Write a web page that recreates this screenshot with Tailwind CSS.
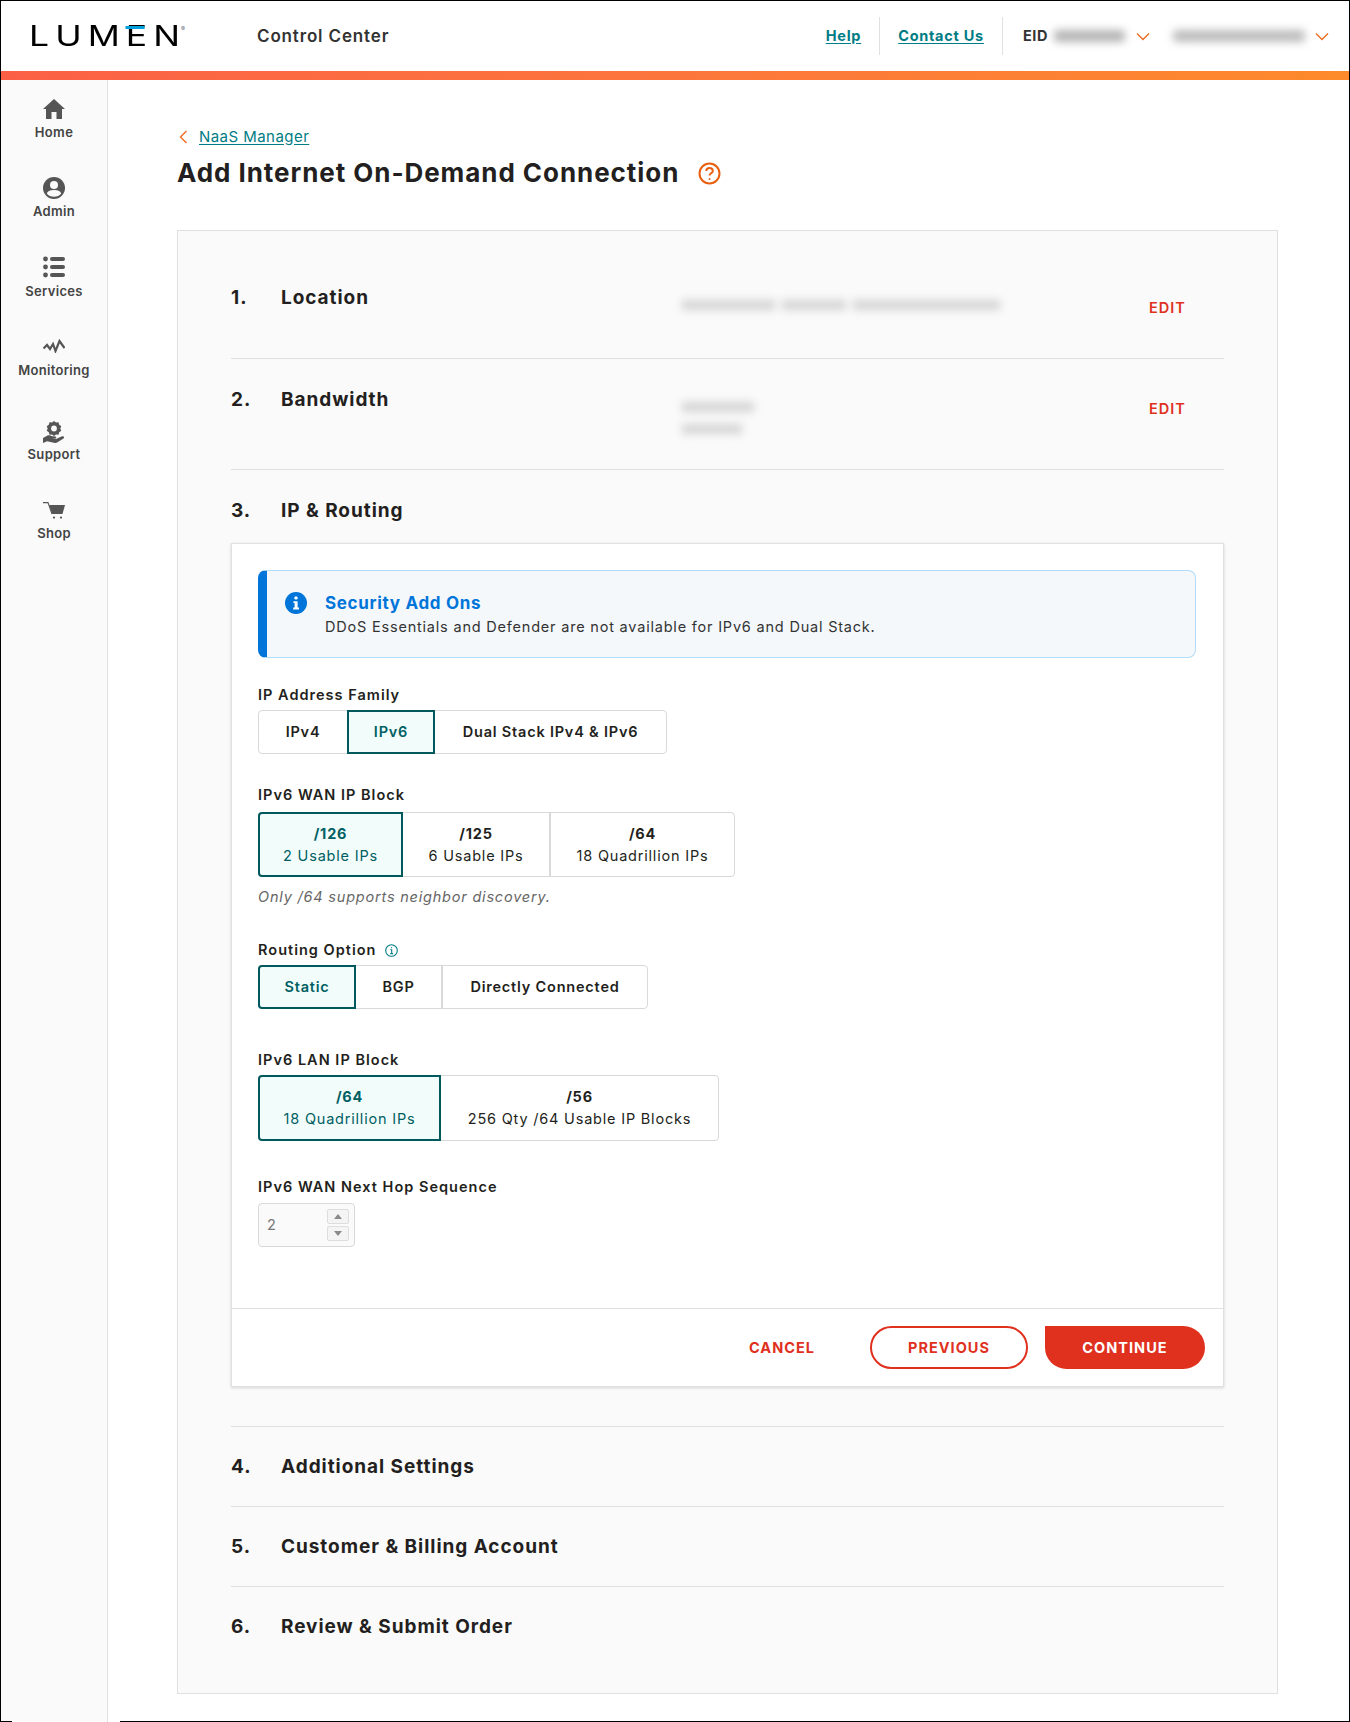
<!DOCTYPE html>
<html lang="en">
  <head>
    <meta charset="UTF-8" />
    <meta name="viewport" content="width=device-width, initial-scale=1.0" />
    <script src="https://cdn.jsdelivr.net/npm/@tailwindcss/browser@4"></script>
    <title>Add Internet On-Demand Connection</title>
  </head>
  <body class="bg-white">
    <div class="relative w-[1350px] h-[1722px] overflow-hidden border-t border-l border-r border-black [font-family:Inter,sans-serif] text-[#231f20]">

      <!-- top header -->
      <header class="h-[70px] flex items-center bg-white">
        <div class="w-[256px] pl-[28px] pb-[1px] flex items-start">
          <span class="relative w-[112px] origin-left scale-x-[1.27] whitespace-nowrap text-[28px] leading-[28px] font-normal tracking-[0.17em] text-black">LUME<span class="tracking-normal">N</span>
            <span class="absolute left-[76px] top-[4px] w-[15px] h-[3px] bg-[#00a0dd]"></span>
          </span>
          <span class="text-[6px] leading-[8px] text-gray-500 ml-[40px] mt-[3px]">®</span>
        </div>
        <span class="mt-[2px] text-[17px] font-semibold text-[#333] tracking-[0.05em]">Control Center</span>
        <div class="ml-auto flex items-center h-[38px] text-[14.5px] font-bold">
          <a class="underline text-[#007c85] tracking-[0.05em] underline-offset-2">Help</a>
          <span class="w-px h-[38px] bg-[#e0e0e0] ml-[18px] mr-[18px]"></span>
          <a class="underline text-[#007c85] tracking-[0.05em] underline-offset-2">Contact Us</a>
          <span class="w-px h-[38px] bg-[#e0e0e0] ml-[18px] mr-[20px]"></span>
          <span class="text-[#333] tracking-[0.04em]">EID</span>
          <span class="ml-[6px] w-[71px] h-[12px] rounded bg-[#b4b4b4] blur-[4px]"></span>
          <svg class="ml-[11px] w-[14px] h-[9px]" viewBox="0 0 14 9" fill="none" stroke="#ee6c1f" stroke-width="1.4"><path d="M1 1.5 L7 7.5 L13 1.5" /></svg>
          <span class="ml-[23px] w-[132px] h-[12px] rounded bg-[#bcbcbc] blur-[4px]"></span>
          <svg class="ml-[10px] mr-[20px] w-[14px] h-[9px]" viewBox="0 0 14 9" fill="none" stroke="#ee6c1f" stroke-width="1.4"><path d="M1 1.5 L7 7.5 L13 1.5" /></svg>
        </div>
      </header>
      <div class="h-[9px] bg-gradient-to-r from-[#fb6046] to-[#fd8a2b]"></div>

      <div class="flex h-[1642px]">
        <!-- sidebar -->
        <nav class="w-[107px] shrink-0 bg-[#fafafa] border-r border-[#e0e0e0] flex flex-col items-center text-[13px] leading-[16px] font-semibold text-[#444] tracking-[0.025em]">
          <div class="flex flex-col items-center pt-[19px] h-[77px]">
            <svg class="w-[22px] h-[20px] mb-[5px]" viewBox="0 0 22 20" fill="#555"><path d="M11 0 L22 10 H19 V20 H13.5 V13 H8.5 V20 H3 V10 H0 Z" /></svg>
            <span>Home</span>
          </div>
          <div class="flex flex-col items-center h-[79px] pt-[20px]">
            <svg class="w-[22px] h-[22px] mb-[4px]" viewBox="0 0 22 22"><circle cx="11" cy="11" r="11" fill="#555" /><circle cx="11" cy="8" r="4" fill="#fafafa" /><path d="M3.8 16.5 C5 13.5 8 13 11 13 C14 13 17 13.5 18.2 16.5 C16.5 18.6 14 19.8 11 19.8 C8 19.8 5.5 18.6 3.8 16.5 Z" fill="#fafafa" /></svg>
            <span>Admin</span>
          </div>
          <div class="flex flex-col items-center h-[79px] pt-[20px]">
            <svg class="w-[22px] h-[22px] mb-[5px]" viewBox="0 0 22 22" fill="#555"><circle cx="2.5" cy="3" r="2.4" /><rect x="7" y="1" width="15" height="4" rx="2" /><circle cx="2.5" cy="11" r="2.4" /><rect x="7" y="9" width="15" height="4" rx="2" /><circle cx="2.5" cy="19" r="2.4" /><rect x="7" y="17" width="15" height="4" rx="2" /></svg>
            <span>Services</span>
          </div>
          <div class="flex flex-col items-center h-[84px] pt-[24px]">
            <svg class="w-[22px] h-[14px] mb-[9px]" viewBox="0 0 22 14" fill="none" stroke="#555" stroke-width="2.2"><path d="M0.5 9.5 L4 6 L7 10 L10 5 L12.5 12 L16.5 2 L21.5 9" /></svg>
            <span>Monitoring</span>
          </div>
          <div class="flex flex-col items-center h-[79px] pt-[22px]">
            <svg class="w-[22px] h-[22px] mb-[3px]" viewBox="0 0 22 22" fill="#555"><path d="M11 0 L13 1.6 L15.5 1.3 L16.2 3.8 L18.3 5.2 L17.3 7.5 L18.3 9.8 L16.2 11.2 L15.5 13.7 L13 13.4 L11 15 L9 13.4 L6.5 13.7 L5.8 11.2 L3.7 9.8 L4.7 7.5 L3.7 5.2 L5.8 3.8 L6.5 1.3 L9 1.6 Z M11 4.6 A2.9 2.9 0 1 0 11 10.4 A2.9 2.9 0 1 0 11 4.6 Z" fill-rule="evenodd" /><path d="M0 17 L4.5 14.6 C6 14 7.5 14.5 9 15.2 L12.5 15.6 C13.8 16 13.5 17.6 12 17.5 L9 17.3 L13 18 L18.5 15.4 C20.8 14.6 22 16.2 20.5 17.4 L14.5 21.3 C13.5 22 12 22 11 21.7 L4 20.2 L0 22 Z" /></svg>
            <span>Support</span>
          </div>
          <div class="flex flex-col items-center pt-[24px]">
            <svg class="w-[22px] h-[17px] mb-[6px]" viewBox="0 0 22 17"><path d="M0 0.6 H5 L9 12" fill="none" stroke="#555" stroke-width="1.1" /><path d="M6.2 3 H22 L19.5 12 H9.2 Z" fill="#555" /><circle cx="11" cy="15.6" r="1.1" fill="#555" /><circle cx="18" cy="15.6" r="1.1" fill="#555" /></svg>
            <span>Shop</span>
          </div>
        </nav>

        <!-- main -->
        <main class="flex-1 pl-[69px]">
          <div class="flex items-center h-[20px] mt-[47px] text-[15px]">
            <svg class="w-[9px] h-[14px] ml-[2px]" viewBox="0 0 9 14" fill="none" stroke="#ee6c1f" stroke-width="1.4"><path d="M7.5 1 L1.5 7 L7.5 13" /></svg>
            <a class="ml-[11px] underline text-[#007c85] underline-offset-2 tracking-[0.03em]">NaaS Manager</a>
          </div>
          <div class="flex items-center h-[36px] mt-[8px]">
            <h1 class="text-[26px] leading-[36px] font-bold text-[#231f20] whitespace-nowrap w-[521px] tracking-[0.036em]">Add Internet On-Demand Connection</h1>
            <svg class="w-[23px] h-[23px]" viewBox="0 0 23 23" fill="none" stroke="#e8600f" stroke-width="2"><circle cx="11.5" cy="11.5" r="10" /><path d="M8.3 9 C8.3 7 9.8 6 11.5 6 C13.3 6 14.8 7.1 14.8 8.9 C14.8 11.2 11.5 11.4 11.5 13.6" /><circle cx="11.5" cy="17" r="1" fill="#e8600f" stroke="none" /></svg>
          </div>

          <!-- steps card -->
          <section class="w-[1101px] h-[1464px] mt-[39px] bg-[#fafafa] border border-[#e0e0e0] px-[53px] text-[19px] font-bold tracking-[0.05em]">
            <div class="flex h-[128px] pt-[52px] border-b border-[#e0e0e0]">
              <span class="w-[50px] leading-[30px]">1.</span>
              <span class="w-[401px] leading-[30px]">Location</span>
              <div class="flex gap-[7px] mt-[17px] w-[318px] h-[14px] blur-[4px]">
                <span class="w-[95px] h-[10px] bg-[#d4d4d4]"></span>
                <span class="w-[65px] h-[10px] bg-[#d4d4d4]"></span>
                <span class="w-[150px] h-[10px] bg-[#d4d4d4]"></span>
              </div>
              <span class="ml-[149px] mt-[10px] text-[14.5px] leading-[30px] h-[30px] font-semibold text-[#e0301e] tracking-[0.07em]">EDIT</span>
            </div>
            <div class="flex h-[111px] pt-[26px] border-b border-[#e0e0e0]">
              <span class="w-[50px] leading-[30px]">2.</span>
              <span class="w-[401px] leading-[30px]">Bandwidth</span>
              <div class="flex flex-col gap-[12px] mt-[17px] w-[318px] blur-[4px]">
                <span class="w-[72px] h-[10px] bg-[#d4d4d4]"></span>
                <span class="w-[60px] h-[10px] bg-[#d4d4d4]"></span>
              </div>
              <span class="ml-[149px] mt-[9px] text-[14.5px] leading-[30px] h-[30px] font-semibold text-[#e0301e] tracking-[0.07em]">EDIT</span>
            </div>
            <div class="flex h-[73px] pt-[26px]">
              <span class="w-[50px] leading-[30px]">3.</span>
              <span class="leading-[30px]">IP &amp; Routing</span>
            </div>

            <!-- open step -->
            <div class="h-[844px] bg-white border border-[#e0e0e0] shadow-[0_1px_3px_rgba(0,0,0,0.15)] text-[14.5px] font-normal tracking-[0.055em]">
              <div class="pl-[26px] pr-[27px] pt-[26px]">
                <div class="flex h-[88px] rounded-[8px] bg-[#f4f8fb] border border-[#aedcfb] border-l-[9px] border-l-[#0075d9] pl-[18px] pt-[20px]">
                  <svg class="w-[22px] h-[22px] mt-[1px]" viewBox="0 0 22 22"><circle cx="11" cy="11" r="11" fill="#0075d9" /><rect x="9.4" y="4.5" width="3.2" height="3" rx="1" fill="#fff" /><path d="M8.4 9.2 H12.6 V15.6 H14 V17.5 H8.2 V15.6 H9.6 V11 H8.4 Z" fill="#fff" /></svg>
                  <div class="ml-[18px]">
                    <p class="text-[17px] leading-[24px] font-bold text-[#0075d9] tracking-[0.04em]">Security Add Ons</p>
                    <p class="text-[14.5px] leading-[24px] text-[#333]">DDoS Essentials and Defender are not available for IPv6 and Dual Stack.</p>
                  </div>
                </div>

                <p class="mt-[27px] mb-[5px] text-[14.5px] leading-[20px] font-semibold tracking-[0.07em]">IP Address Family</p>
                <div class="flex w-[409px] h-[44px] border border-[#d9d9d9] rounded-[4px] font-semibold">
                  <div class="w-[88px] flex items-center justify-center">IPv4</div>
                  <div class="w-[88px] -my-px flex items-center justify-center bg-[#f2fcfb] border-2 border-[#00595c] text-[#005f63]">IPv6</div>
                  <div class="flex-1 flex items-center justify-center">Dual Stack IPv4 &amp; IPv6</div>
                </div>

                <p class="mt-[31px] mb-[7px] text-[14.5px] leading-[20px] font-semibold tracking-[0.07em]">IPv6 WAN IP Block</p>
                <div class="flex w-[477px] h-[65px] border border-[#d9d9d9] rounded-[4px] text-center leading-[22px]">
                  <div class="w-[145px] -my-px -ml-px flex flex-col justify-center bg-[#f2fcfb] border-2 border-[#00595c] rounded-l-[4px] text-[#005f63]"><b class="font-bold">/126</b><span>2 Usable IPs</span></div>
                  <div class="w-[148px] flex flex-col justify-center border-r-2 border-[#d9d9d9]"><b class="font-bold">/125</b><span>6 Usable IPs</span></div>
                  <div class="flex-1 flex flex-col justify-center"><b class="font-bold">/64</b><span>18 Quadrillion IPs</span></div>
                </div>
                <p class="mt-[10px] leading-[20px] italic text-[#666]">Only /64 supports neighbor discovery.</p>

                <div class="flex items-center gap-[8px] mt-[33px] mb-[5px]">
                  <p class="text-[14.5px] leading-[20px] font-semibold tracking-[0.07em]">Routing Option</p>
                  <svg class="w-[13px] h-[13px]" viewBox="0 0 13 13" fill="none" stroke="#007c85" stroke-width="1.1"><circle cx="6.5" cy="6.5" r="5.8" /><path d="M5.3 5.7 H6.7 V9.6 M5.2 9.6 H8.1 M6.5 3.2 V4.2" /></svg>
                </div>
                <div class="flex w-[390px] h-[44px] border border-[#d9d9d9] rounded-[4px] font-semibold">
                  <div class="w-[98px] -my-px -ml-px flex items-center justify-center bg-[#f2fcfb] border-2 border-[#00595c] rounded-l-[4px] text-[#005f63]">Static</div>
                  <div class="w-[87px] flex items-center justify-center border-r-2 border-[#d9d9d9]">BGP</div>
                  <div class="flex-1 flex items-center justify-center">Directly Connected</div>
                </div>

                <p class="mt-[41px] mb-[5px] text-[14.5px] leading-[20px] font-semibold tracking-[0.07em]">IPv6 LAN IP Block</p>
                <div class="flex w-[461px] h-[66px] border border-[#d9d9d9] rounded-[4px] text-center leading-[22px]">
                  <div class="w-[183px] -my-px -ml-px flex flex-col justify-center bg-[#f2fcfb] border-2 border-[#00595c] rounded-l-[4px] text-[#005f63]"><b class="font-bold">/64</b><span>18 Quadrillion IPs</span></div>
                  <div class="flex-1 flex flex-col justify-center"><b class="font-bold">/56</b><span>256 Qty /64 Usable IP Blocks</span></div>
                </div>

                <p class="mt-[36px] mb-[6px] text-[14.5px] leading-[20px] font-semibold tracking-[0.07em]">IPv6 WAN Next Hop Sequence</p>
                <div class="flex items-center justify-between w-[97px] h-[44px] bg-[#fafafa] border border-[#d9d9d9] rounded-[4px] pl-[8px] pr-[5px] text-[#777]">
                  <span>2</span>
                  <div class="flex flex-col gap-[2px]">
                    <div class="w-[22px] h-[15px] flex items-center justify-center border border-[#ddd] rounded-[2px] bg-[#f4f4f4]"><div class="w-0 h-0 border-x-[4px] border-x-transparent border-b-[5px] border-b-[#8a8a8a]"></div></div>
                    <div class="w-[22px] h-[15px] flex items-center justify-center border border-[#ddd] rounded-[2px] bg-[#f4f4f4]"><div class="w-0 h-0 border-x-[4px] border-x-transparent border-t-[5px] border-t-[#8a8a8a]"></div></div>
                  </div>
                </div>
              </div>

              <div class="mt-[61px] h-[77px] border-t border-[#e0e0e0] pt-[17px] pr-[18px] flex justify-end items-start font-bold tracking-[0.07em]">
                <button class="h-[43px] mr-[55px] text-[#e0301e]">CANCEL</button>
                <button class="w-[158px] h-[43px] mr-[17px] rounded-[22px] border-2 border-[#e0301e] text-[#e0301e] bg-white">PREVIOUS</button>
                <button class="w-[160px] h-[43px] rounded-[22px] rounded-tl-none bg-[#e0301e] text-white">CONTINUE</button>
              </div>
            </div>

            <div class="flex items-center h-[80px] pt-[2px] mt-[39px] border-t border-[#e0e0e0]">
              <span class="w-[50px]">4.</span><span>Additional Settings</span>
            </div>
            <div class="flex items-center h-[80px] pt-[2px] border-t border-[#e0e0e0]">
              <span class="w-[50px]">5.</span><span>Customer &amp; Billing Account</span>
            </div>
            <div class="flex items-center h-[80px] pt-[2px] border-t border-[#e0e0e0]">
              <span class="w-[50px]">6.</span><span>Review &amp; Submit Order</span>
            </div>
          </section>
        </main>
      </div>

      <!-- window edge along the bottom, broken under the sidebar -->
      <div class="absolute left-0 bottom-0 w-[11px] h-px bg-black"></div>
      <div class="absolute left-[119px] right-0 bottom-0 h-px bg-black"></div>
    </div>
  </body>
</html>
